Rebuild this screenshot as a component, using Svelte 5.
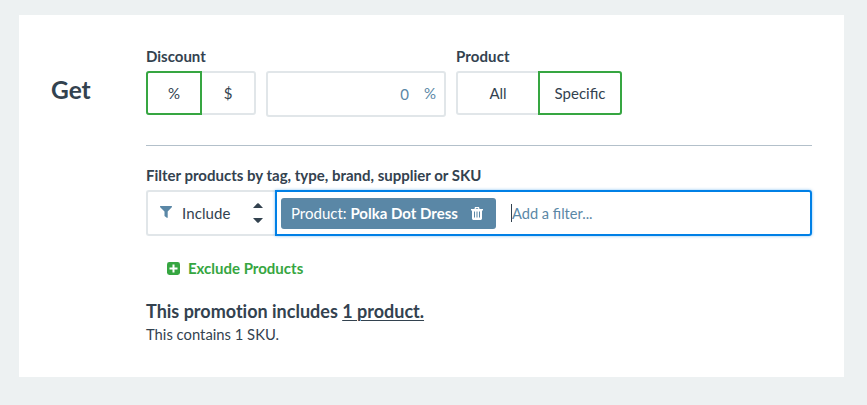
<script>
  let unit = $state('%');
  let scope = $state('Specific');
</script>

<main>
  <section class="card">
    <h1>Get</h1>
    <div class="content">
      <div class="fields">
        <div>
          <div class="label">Discount</div>
          <div class="controls">
            <div class="toggle unit">
              {#each ['%', '$'] as u}
                <button class:active={unit === u} onclick={() => (unit = u)}><span>{u}</span></button>
              {/each}
            </div>
            <div class="amount"><span>0</span><span class="suffix">%</span></div>
          </div>
        </div>
        <div>
          <div class="label product-label">Product</div>
          <div class="toggle scope">
            {#each ['All', 'Specific'] as s}
              <button class:active={scope === s} onclick={() => (scope = s)}><span>{s}</span></button>
            {/each}
          </div>
        </div>
      </div>

      <hr />

      <div class="label filter-label"><span>Filter products by tag, type, brand, supplier or SKU</span></div>
      <div class="filter">
        <div class="mode">
          <svg class="funnel" width="12" height="12" viewBox="0 0 12 12"><path d="M.4 0h11.2q.7.5.2 1.2L7.7 5.4v6q-.3.7-.9.4L4.5 9.9V5.4L.2 1.2Q-.3.5.4 0z" fill="#5a87a6" /></svg>
          <span class="include">Include</span>
          <svg class="arrows" width="10" height="20" viewBox="0 0 10 20"><path d="M0 5 4.2.5q.8-.7 1.6 0L10 5zM0 15h10l-4.2 4.5q-.8.7-1.6 0z" fill="#33424f" /></svg>
        </div>
        <div class="entry">
          <div class="tag">
            <span class="tag-text">Product: <b>Polka Dot Dress</b></span>
            <svg width="12" height="13" viewBox="0 0 12 13"><path d="M4 2 4.5.7h3L8 2" fill="none" stroke="#fff" stroke-width="1.3" /><path fill="#fff" fill-rule="evenodd" d="M0 2h12v1.4h-1v8.2q0 1.4-1.3 1.4H2.3Q1 13 1 11.6V3.4H0zM3 4.6v6h1v-6zM5.5 4.6v6h1v-6zM8 4.6v6h1v-6z" /></svg>
          </div>
          <i class="caret"></i><span class="placeholder">Add a filter...</span>
        </div>
      </div>

      <div class="exclude">
        <svg width="13" height="13" viewBox="0 0 13 13"><rect width="13" height="13" rx="2.4" fill="#36a641" /><path d="M6.5 2.5v8M2.5 6.5h8" stroke="#fff" stroke-width="2" /></svg>
        <span>Exclude Products</span>
      </div>

      <div class="summary"><span>This promotion includes <u>1 product.</u></span></div>
      <div class="detail"><span>This contains 1 SKU.</span></div>
    </div>
  </section>
</main>

<style>
  main {
    box-sizing: border-box;
    height: 405px;
    padding: 15px 23px 28px 19px;
    background: #edf1f2;
    font: 15px/20px Lato, sans-serif;
    color: #33424f;
    white-space: nowrap;
  }
  main * { box-sizing: border-box; }
  .card {
    display: flex;
    height: 362px;
    padding: 31px 32px 0;
    background: #fff;
  }
  h1 {
    width: 95px;
    margin: 28px 0 0;
    font-size: 24.5px;
    line-height: 31px;
    font-weight: 700;
  }
  .content { width: 666px; }
  .fields { display: flex; gap: 10px; height: 99px; }
  .controls { display: flex; gap: 10px; }
  .label { height: 25px; font-weight: 700; }
  .product-label { letter-spacing: 0.1px; }
  .toggle {
    display: flex;
    height: 44px;
    border-radius: 3px;
    box-shadow: inset 0 0 0 2px #e1e6e9;
  }
  .unit { width: 110px; }
  .scope { width: 166px; }
  button {
    padding: 0;
    border: 2px solid transparent;
    background: none;
    font: inherit;
    color: inherit;
  }
  .unit button:first-child { width: 56px; border-radius: 3px 0 0 3px; }
  .unit button:last-child { width: 54px; padding-right: 2px; }
  .scope button:first-child { width: 82px; padding-left: 2px; }
  .scope button:last-child { width: 84px; border-radius: 0 3px 3px 0; }
  button.active { border-color: #36a641; }
  .amount {
    display: flex;
    justify-content: flex-end;
    gap: 15px;
    width: 180px;
    height: 46px;
    padding: 11px 8px 0;
    border: 2px solid #e1e6e9;
    border-radius: 3px;
    color: #5a87a6;
  }
  .suffix { margin-top: -1px; }
  hr { height: 1px; margin: 0; border: 0; background: #b3c0ca; }
  .filter-label { margin-top: 19px; }
  .filter { display: flex; height: 46px; }
  .mode {
    display: flex;
    align-items: center;
    width: 130px;
    border: 2px solid #e1e6e9;
    border-right: 0;
    border-radius: 3px 0 0 3px;
    padding-left: 12px;
  }
  .funnel { margin-top: -3px; }
  .include { width: 71px; margin-left: 10px; letter-spacing: 0.1px; }
  .entry {
    display: flex;
    align-items: center;
    width: 537px;
    margin-left: -1px;
    padding-left: 3px;
    border: 2px solid #0080e6;
    border-radius: 0 3px 3px 0;
    box-shadow: 0 0 3px #0080e680;
  }
  .tag {
    display: flex;
    align-items: center;
    justify-content: space-between;
    width: 215px;
    height: 31px;
    margin-left: 1px;
    padding: 0 13px 0 10px;
    border-radius: 3px;
    background: #5a87a6;
    color: #fff;
  }
  .caret { width: 1px; height: 18px; margin: -1px 0 0 15px; background: #33424f; }
  .placeholder { margin-top: 2px; color: #5a87a6; font-size: 14.6px; }
  .exclude {
    display: flex;
    align-items: center;
    gap: 8px;
    height: 20px;
    margin: 22px 0 0 21px;
    color: #36a641;
    font-weight: 700;
  }
  .summary {
    margin-top: 21px;
    font-size: 18px;
    line-height: 24px;
    font-weight: 700;
    font-variant-ligatures: no-common-ligatures;
  }
  u { text-decoration-thickness: 1px; text-underline-offset: 2px; }
  .detail { margin-top: 1px; font-size: 14.8px; }
</style>
